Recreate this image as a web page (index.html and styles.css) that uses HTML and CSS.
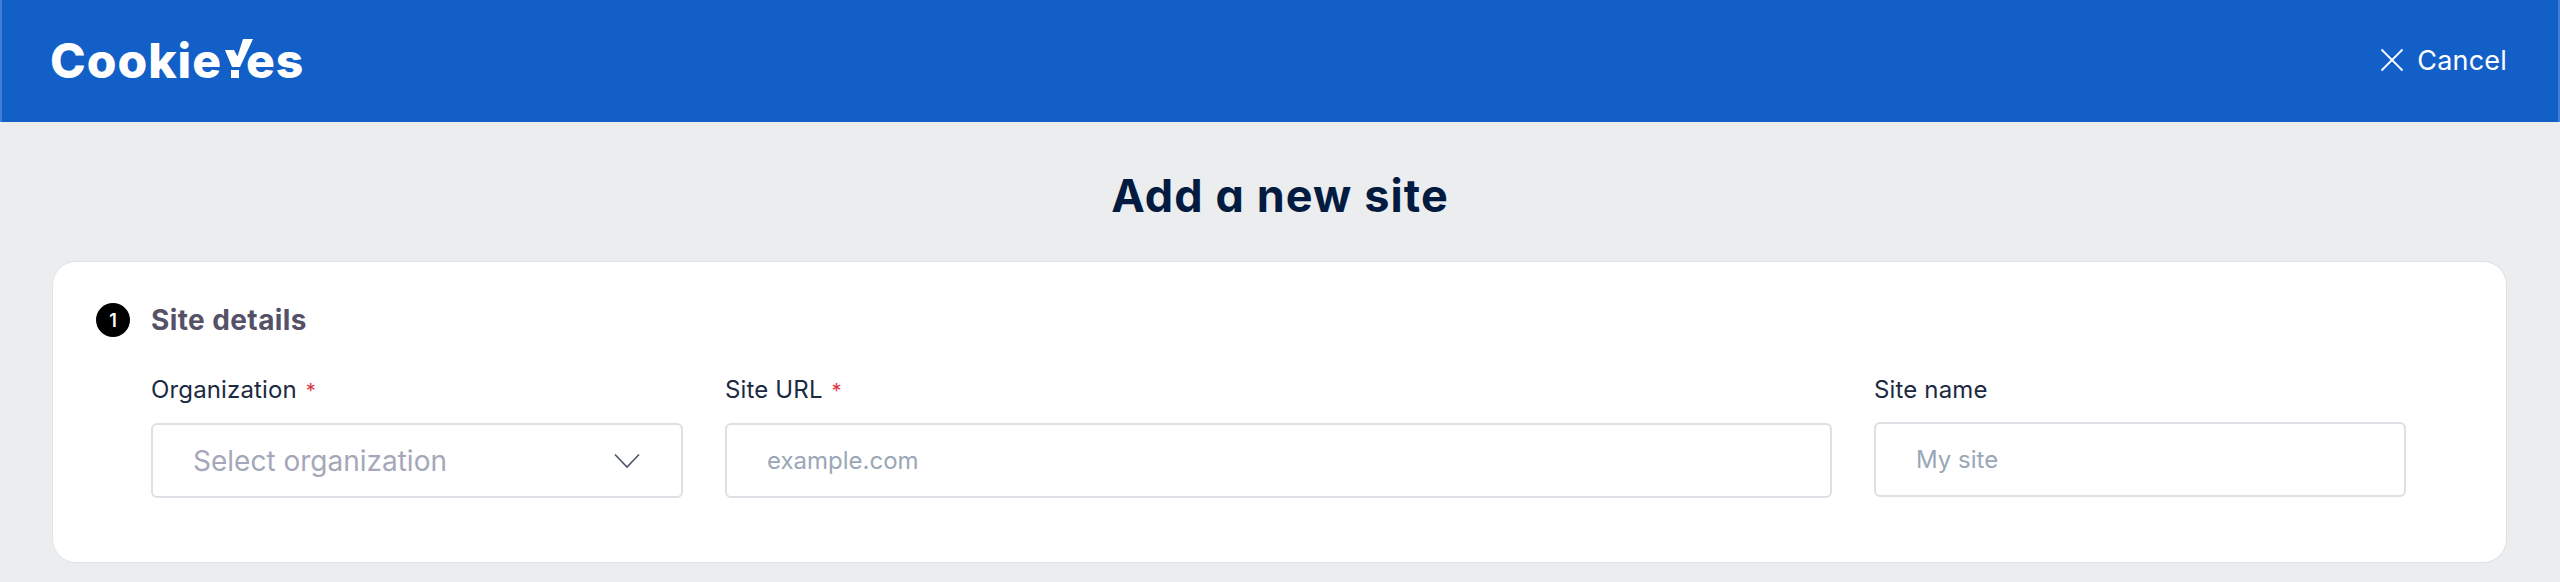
FILE: index.html
```html
<!DOCTYPE html>
<html lang="en">
<head>
    <meta charset="UTF-8">
    <meta name="viewport" content="width=device-width, initial-scale=1.0">
    <title>Add a new site</title>
    <link rel="stylesheet" href="styles.css">
</head>
<body>
    <header class="topbar">
        <div class="logo">
            <span>Cookie</span>
            <svg class="logo-mark" width="28" height="39" viewBox="0 0 28 39">
                <path d="M0 11h9l3.500 6.500L18 0h10L15 28H7z" fill="#fff"/>
                <rect x="6" y="31" width="8" height="8" fill="#fff"/>
            </svg>
            <span>es</span>
        </div>
        <a class="cancel" href="#">
            <svg width="24" height="24" viewBox="0 0 24 24">
                <path d="M1.5 1.5l21 21M22.5 1.5l-21 21" stroke="#fff" stroke-width="1.8" fill="none"/>
            </svg>
            Cancel
        </a>
    </header>

    <h1 class="page-title">Add a new site</h1>

    <form class="card">
        <div class="card-head">
            <span class="step">1</span>
            <h2>Site details</h2>
        </div>
        <div class="fields">
            <div class="field">
                <label for="organization">Organization <em>*</em></label>
                <div class="select" id="organization">
                    <span>Select organization</span>
                    <svg width="26" height="16" viewBox="0 0 26 16">
                        <path d="M1 1.5l12 12.5L25 1.5" stroke="#4b5563" stroke-width="1.6" fill="none"/>
                    </svg>
                </div>
            </div>
            <div class="field">
                <label for="siteUrl">Site URL <em>*</em></label>
                <input type="text" id="siteUrl" placeholder="example.com">
            </div>
            <div class="field">
                <label for="siteName">Site name</label>
                <input type="text" id="siteName" placeholder="My site">
            </div>
        </div>
    </form>
</body>
</html>
```

FILE: styles.css
```css
body {
    font-family: 'Inter', sans-serif;
    background-color: #ebedef;
    margin: 0;
    height: 582px;
    overflow: hidden;
}

.topbar {
    display: flex;
    align-items: center;
    justify-content: space-between;
    height: 122px;
    padding: 0 51px 2px 48px;
    box-sizing: border-box;
    background-color: #1260c7;
    border-left: 2px solid #3f80d3;
    border-right: 2px solid #3f80d3;
    color: #fff;
}

.logo {
    display: flex;
    align-items: baseline;
    font-size: 48px;
    font-weight: 800;
    letter-spacing: 1px;
    line-height: 40px;
}

.logo-mark {
    margin: 0 -7px 0 3px;
}

.cancel {
    display: flex;
    align-items: center;
    gap: 13px;
    color: #fff;
    font-size: 27px;
    letter-spacing: 0.2px;
    text-decoration: none;
}

.page-title {
    margin: 46px 0 0;
    height: 93px;
    text-align: center;
    color: #031b41;
    font-size: 45px;
    font-weight: 700;
    line-height: 56px;
    letter-spacing: 1.1px;
    font-feature-settings: 'cv11';
}

.card {
    display: block;
    margin: 0 53px 0 52px;
    height: 302px;
    padding: 41px 100px 0 43px;
    box-sizing: border-box;
    background-color: #fff;
    border: 1px solid #e0e3e6;
    border-radius: 24px;
}

.card-head {
    display: flex;
    align-items: center;
    gap: 21px;
    height: 34px;
}

.step {
    display: flex;
    align-items: center;
    justify-content: center;
    width: 34px;
    height: 34px;
    border-radius: 50%;
    background-color: #000;
    color: #fff;
    font-size: 18px;
    font-weight: 600;
}

.card-head h2 {
    margin: 0;
    color: #555268;
    font-size: 28px;
    font-weight: 700;
    letter-spacing: 0.4px;
}

.fields {
    display: grid;
    grid-template-columns: 532px 1fr 532px;
    gap: 42px;
    margin: 36px 0 0 55px;
}

label {
    display: block;
    margin-bottom: 15px;
    color: #1b2a41;
    font-size: 24px;
    line-height: 34px;
    letter-spacing: 0.15px;
}

label em {
    font-style: normal;
    font-size: 20px;
    margin-left: 2px;
    color: #dc3545;
}

input, .select {
    display: flex;
    align-items: center;
    justify-content: space-between;
    width: 100%;
    height: 75px;
    padding: 0 40px;
    box-sizing: border-box;
    border: 2px solid #dde1e5;
    border-radius: 6px;
    background-color: #fff;
    font-family: 'Inter', sans-serif;
    font-size: 24px;
}

input::placeholder {
    color: #9aa7b8;
    opacity: 1;
}

.select {
    padding-right: 41px;
    color: #a4a8b8;
    font-size: 28px;
}
```
